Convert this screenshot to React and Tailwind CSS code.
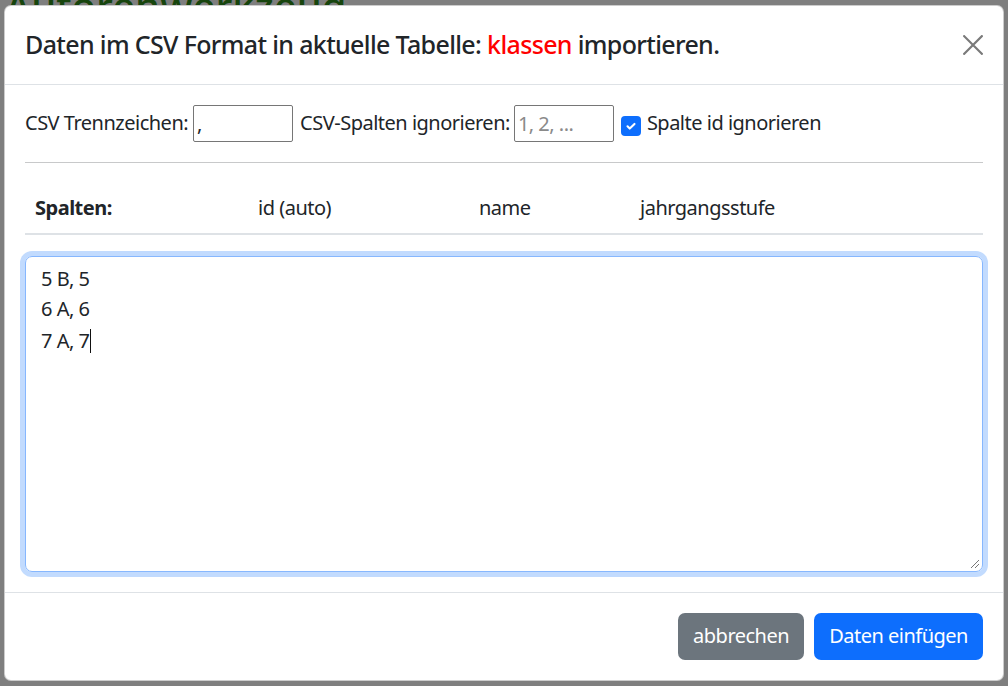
import React from "react";

const columns = [
  { label: "Spalten:", width: "w-[223px]", bold: true },
  { label: "id (auto)", width: "w-[221px]" },
  { label: "name", width: "w-[161px]" },
  { label: "jahrgangsstufe", width: "flex-1" },
];

const csvLines = ["5 B, 5", "6 A, 6", "7 A, 7"];

const BackgroundPage = () => (
  <div className="px-[5px]">
    <h1 className="text-[40px] leading-none text-[#2f8a1a] -mt-[14px] font-medium">
      Autorenwerkzeug
    </h1>
    <div className="mt-[46px] h-[34px] border-b-2 border-[#222]" />
    <div className="h-[60px] border-b border-[#bbb]" />
    <div className="h-[46px] border-b border-[#bbb]" />
    <div className="h-[48px] border-b-2 border-[#111]" />
    <div className="h-[45px] border-b border-[#bbb]" />
    <div className="h-[50px] border-b border-[#bbb]" />
    <div className="h-[57px] border-b border-[#bbb]" />
    <div className="h-[103px] border-b border-[#bbb]" />
    <div className="h-[43px] border-b border-[#1d4ed8]" />
    <div className="h-[47px] border-b border-[#1d4ed8]" />
  </div>
);

const Checkbox = () => (
  <span className="inline-flex h-[20px] w-[20px] items-center justify-center rounded-[4px] bg-[#0d6efd]">
    <svg width="14" height="14" viewBox="0 0 20 20" fill="none">
      <path
        d="M5 10.5l3.2 3.2L15 7"
        stroke="#fff"
        strokeWidth="3"
        strokeLinecap="round"
        strokeLinejoin="round"
      />
    </svg>
  </span>
);

export default function App() {
  return (
    <div className="relative h-[686px] w-[1008px] overflow-hidden bg-white font-['Noto_Sans',_'Open_Sans',_sans-serif] text-[#212529]">
      <BackgroundPage />
      <div className="absolute inset-0 bg-black/50" />

      {/* modal */}
      <div className="absolute left-[4px] top-[5px] w-[1000px] rounded-[7px] border border-black/20 bg-white">
        <div className="flex items-center justify-between border-b border-[#dee2e6] p-[20px]">
          <h5 className="text-[25px] leading-[1.5] font-medium tracking-[-0.026em]">
            Daten im CSV Format in aktuelle Tabelle:{" "}
            <span className="text-[#ff0000]">klassen</span> importieren.
          </h5>
          <button className="flex h-[30px] w-[20px] items-center justify-center">
            <svg width="20" height="20" viewBox="0 0 20 20">
              <path
                d="M1.2 1.2l17.6 17.6M18.8 1.2L1.2 18.8"
                stroke="#7a7a7a"
                strokeWidth="2.2"
                strokeLinecap="square"
              />
            </svg>
          </button>
        </div>

        <div className="p-[20px] text-[20px] leading-[1.5] tracking-[-0.025em]">
          <div className="flex items-center">
            <span>CSV Trennzeichen:</span>
            <input
              readOnly
              value=","
              className="ml-[5px] h-[37px] w-[100px] rounded-[2px] border border-[#767676] px-[3px] text-[20px] outline-none"
            />
            <span className="ml-[7px]">CSV-Spalten ignorieren:</span>
            <input
              readOnly
              placeholder="1, 2, ..."
              className="ml-[4px] h-[37px] w-[100px] rounded-[2px] border border-[#767676] px-[3px] text-[20px] outline-none placeholder:text-[#8a8a8a]"
            />
            <span className="ml-[7px] self-start pt-[6px]">
              <Checkbox />
            </span>
            <span className="ml-[6px]">Spalte id ignorieren</span>
          </div>

          <hr className="my-[20px] border-t border-[#c8c9ca]" />

          <div className="mb-[21px] flex border-b-2 border-[#dee2e6]">
            {columns.map((c) => (
              <div
                key={c.label}
                className={`${c.width} px-[10px] py-[10px] ${c.bold ? "font-bold" : ""}`}
              >
                {c.label}
              </div>
            ))}
          </div>

          <div className="relative h-[316px] rounded-[7px] border border-[#86b7fe] px-[15px] py-[7px] shadow-[0_0_0_5px_rgba(13,110,253,0.25)]">
            {csvLines.map((line, i) => (
              <div key={line}>
                {line}
                {i === csvLines.length - 1 && (
                  <span className="ml-[1px] inline-block h-[24px] w-[1px] translate-y-[5px] bg-[#111]" />
                )}
              </div>
            ))}
            <svg
              className="absolute bottom-[2px] right-[2px]"
              width="12"
              height="12"
              viewBox="0 0 12 12"
            >
              <path d="M11 3L3 11M11 7L7 11" stroke="#777" strokeWidth="1" />
            </svg>
          </div>
        </div>

        <div className="flex justify-end border-t border-[#dee2e6] p-[15px] text-[20px] tracking-[-0.025em]">
          <button className="m-[5px] h-[47px] rounded-[7px] bg-[#6c757d] px-[15px] text-white">
            abbrechen
          </button>
          <button className="m-[5px] h-[47px] rounded-[7px] bg-[#0d6efd] px-[15px] text-white">
            Daten einfügen
          </button>
        </div>
      </div>
    </div>
  );
}
